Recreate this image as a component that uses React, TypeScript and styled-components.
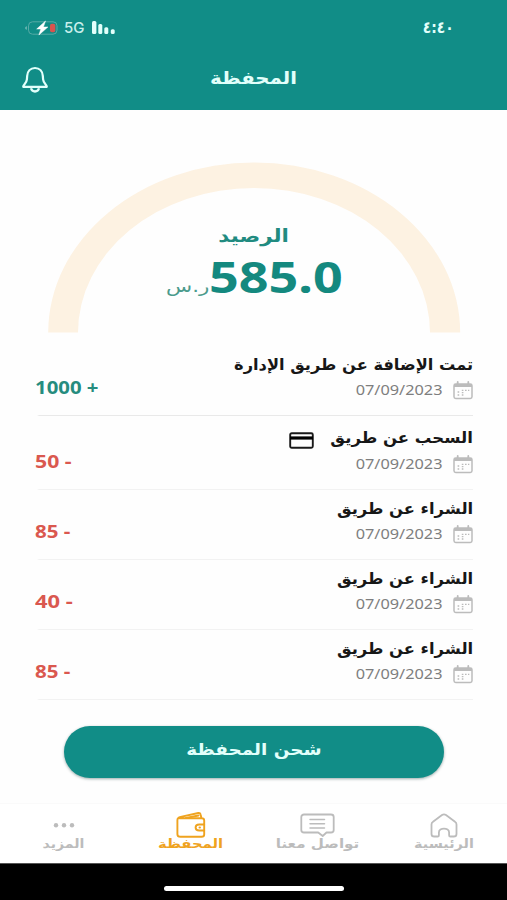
import React from "react";
import styled, { createGlobalStyle } from "styled-components";

const TEAL = "#118d87";
const GREY = "#bcbcbc";
const ORANGE = "#efa31f";

const GlobalStyle = createGlobalStyle`
  * { box-sizing: border-box; }
  body { margin: 0; background: #fefefe; }
  button { border: 0; background: none; padding: 0; font: inherit; cursor: pointer; }
  svg { display: block; flex: none; }
`;

const Screen = styled.div`
  width: 507px;
  height: 900px;
  overflow: hidden;
  display: flex;
  flex-direction: column;
  background: #fefefe;
  font-family: "DejaVu Sans", sans-serif;
`;

const Header = styled.header`
  height: 110px;
  flex: none;
  background: ${TEAL};
  color: #e2fffb;
`;

const StatusBar = styled.div`
  height: 48px;
  padding: 7px 53px 0 24px;
  display: flex;
  align-items: center;
  justify-content: space-between;
`;

const StatusIcons = styled.div`
  display: flex;
  align-items: center;
`;

const Network = styled.span`
  width: 28px;
  margin: 0 0 0 6px;
  font: 500 15px/18px Inter, sans-serif;
  color: #c9efec;
`;

const Text = styled.span<{
  $size: number;
  $line: number;
  $stretch?: number;
  $origin?: string;
  $color?: string;
  $weight?: number;
  $latin?: boolean;
}>`
  display: block;
  white-space: nowrap;
  font-family: ${(p) => (p.$latin ? '"Noto Sans", sans-serif' : '"DejaVu Sans", sans-serif')};
  font-size: ${(p) => p.$size}px;
  line-height: ${(p) => p.$line}px;
  font-weight: ${(p) => p.$weight ?? 700};
  color: ${(p) => p.$color ?? "inherit"};
  transform: scaleX(${(p) => p.$stretch ?? 1});
  transform-origin: ${(p) => p.$origin ?? "center"};
`;

const TitleBar = styled.div`
  height: 62px;
  padding: 0 21px;
  display: grid;
  grid-template-columns: 28px 1fr 28px;
  align-items: center;
  justify-items: center;
`;

const TitleSlot = styled.div`
  padding: 0 0 2px 0;
`;

const Gauge = styled.section`
  height: 235px;
  flex: none;
  padding: 52px 0 0 47px;
  display: grid;
  grid-template-columns: 414px;
  grid-template-rows: 171px;
  > * { grid-area: 1 / 1; }
`;

const Balance = styled.div`
  padding-top: 60px;
  display: flex;
  flex-direction: column;
  align-items: center;
`;

const Amount = styled.div`
  direction: ltr;
  width: 100%;
  height: 54px;
  display: grid;
  grid-template-columns: 162px 1fr;
  align-items: center;
  justify-items: end;
  > :last-child { justify-self: start; }
`;

const Currency = styled.div`
  padding-top: 18px;
`;

const List = styled.ul`
  list-style: none;
  margin: 0;
  padding: 0 34px 0 35px;
`;

const Row = styled.li<{ $height: number; $strong: boolean }>`
  height: ${(p) => p.$height}px;
  padding-bottom: 15px;
  display: flex;
  justify-content: space-between;
  align-items: flex-end;
  border-bottom: 1px solid;
  border-image: linear-gradient(to right, transparent 3px, ${(p) => (p.$strong ? "#e9e9e9" : "#f2f2f2")} 5px) 1;
`;

const Details = styled.div`
  display: flex;
  flex-direction: column;
  align-items: flex-start;
`;

const RowTitle = styled.div<{ $gap: number }>`
  height: 24px;
  margin-bottom: ${(p) => p.$gap}px;
  display: flex;
  align-items: center;
`;

const TitleBox = styled.div<{ $width: number }>`
  width: ${(p) => p.$width}px;
  display: flex;
`;

const CardSlot = styled.div`
  margin: 5px 16px 0 0;
`;

const DateLine = styled.div`
  height: 20px;
  display: flex;
  align-items: center;
  gap: 11px;
`;

const Sum = styled.div`
  direction: ltr;
  padding-bottom: 1px;
`;

const ActionArea = styled.div`
  height: 103px;
  flex: none;
  padding: 26px 63px 0 64px;
`;

const ChargeButton = styled.button`
  width: 100%;
  height: 52px;
  padding-bottom: 5px;
  display: flex;
  align-items: center;
  justify-content: center;
  border-radius: 26px;
  background: ${TEAL};
  color: #e2fffb;
  box-shadow: 0 1px 3px rgba(0, 50, 48, 0.4);
`;

const Nav = styled.nav`
  height: 60px;
  flex: none;
  display: grid;
  grid-template-columns: 127px 126px 127px 127px;
  background: #fff;
  border-top: 1px solid #fafafa;
`;

const NavItem = styled.button<{ $active?: boolean }>`
  padding-top: 8px;
  display: flex;
  flex-direction: column;
  align-items: center;
  color: ${(p) => (p.$active ? ORANGE : GREY)};
`;

const NavIcon = styled.div`
  height: 26px;
  margin-bottom: -3px;
  display: flex;
  align-items: center;
`;

const HomeArea = styled.footer`
  flex: 1;
  background: #000;
  border-top: 1px solid #555;
  display: flex;
  justify-content: center;
  padding-top: 22px;
`;

const HomeIndicator = styled.div`
  width: 180px;
  height: 5px;
  border-radius: 3px;
  background: #fff;
`;

const BatteryIcon = () => (
  <svg width="34" height="16" viewBox="0 0 34 16">
    <path d="M2.8 6.2v3.6C.6 9.2.6 6.8 2.8 6.2Z" fill="#72b9b5" />
    <rect x="4.500" y="1.800" width="28.500" height="12.400" rx="4" fill="none" stroke="#56aaa6" />
    <rect x="26" y="3.700" width="5.300" height="8.600" rx="1.800" fill="#d9534e" />
    <path d="m21.500 1-8.800 8h4.100l-1.900 6 9-8h-4.500Z" fill="#fff" stroke="#fff" strokeWidth=".5" />
  </svg>
);

const SignalIcon = () => (
  <svg width="24" height="14" viewBox="0 0 24 14" fill="#e2fffb">
    <rect x="0" y="0" width="4.400" height="13" rx="1.500" />
    <rect x="6.300" y="3" width="4" height="10" rx="1.500" />
    <rect x="12.300" y="6.200" width="4" height="6.800" rx="1.500" />
    <rect x="18.800" y="8.200" width="3.900" height="4.800" rx="1.500" />
  </svg>
);

const BellIcon = () => (
  <svg width="28" height="28" viewBox="0 0 28 28" fill="none" stroke="#e2fffb" strokeWidth="2.200" strokeLinejoin="round">
    <path d="M14 3c-4.700 0-7.500 3.300-7.800 7.800l-.3 3.600c-.2 2.200-.9 3.100-2.200 4.600-.9 1-1.500 1.600-1.500 2.800h23.600c0-1.200-.6-1.800-1.500-2.800-1.300-1.500-2-2.400-2.200-4.600l-.3-3.600C21.500 6.300 18.700 3 14 3Z" />
    <path d="M10 23.300c.5 2 2 3.200 4 3.200s3.500-1.200 4-3.200" strokeWidth="2.300" />
  </svg>
);

const CalendarIcon = () => (
  <svg width="20" height="19" viewBox="0 0 20 19" fill="none" stroke="#bcbcbc">
    <rect x="1" y="3" width="18" height="14.500" rx="1.700" strokeWidth="1.500" />
    <path d="M1 4.500h18" strokeWidth="3" />
    <path d="M4.700 1v3.500M15.300 1v3.500" strokeWidth="1.800" strokeLinecap="round" />
    <path d="M8.800 9.300h1.600M12 9.300h1.600M15 9.300h1.300M4.600 11h1.600M8.800 11.600h1.600M4.600 14h1.600M8.800 14h1.600" strokeWidth="1.300" />
  </svg>
);

const CardIcon = () => (
  <svg width="25" height="17" viewBox="0 0 25 17" fill="none" stroke="#1a1a1a">
    <rect x="1.200" y="1.200" width="22.600" height="14.600" rx="1.500" strokeWidth="1.900" />
    <path d="M1 6h23" strokeWidth="3.200" stroke="#000" />
  </svg>
);

const HomeIcon = () => (
  <svg width="28" height="25" viewBox="0 0 28 25" fill="none" stroke="currentColor" strokeWidth="1.800" strokeLinejoin="round">
    <path d="M4.200 23.500h3.500c.8 0 1.200-.5 1.200-1.300v-2.700c0-5.300 10.200-5.300 10.200 0v2.700c0 .8.400 1.300 1.200 1.300h3.500c1.600 0 2.700-1 2.700-2.600V11.500c0-1.300-.4-2.100-1.500-2.800L16 2c-1.400-.9-2.600-.9-4 0L3 8.700c-1.100.7-1.500 1.500-1.500 2.800v9.400c0 1.600 1.100 2.600 2.700 2.600Z" />
  </svg>
);

const ChatIcon = () => (
  <svg width="35" height="25" viewBox="0 0 35 25" fill="none" stroke="currentColor" strokeWidth="1.800" strokeLinejoin="round">
    <path d="M4 1.500h27c1.600 0 2.700 1 2.700 2.500v13c0 1.500-1.100 2.500-2.700 2.500h-4.500L22.700 23l-4.500-3.500H4c-1.600 0-2.700-1-2.700-2.500V4c0-1.500 1.100-2.500 2.700-2.500Z" />
    <path d="M10 6.500h14.500M10 10.700h14.500M10 14.900h14.500" strokeWidth="1.500" strokeLinecap="round" />
  </svg>
);

const WalletIcon = () => (
  <svg width="30" height="26" viewBox="0 0 30 26" fill="none" stroke="currentColor" strokeWidth="1.900" strokeLinejoin="round" strokeLinecap="round">
    <path d="M3.500 6.300h22c1.700 0 2.700.8 2.700 2.200v4h-5c-4.800 0-4.800 6 0 6h5v4c0 1.500-1 2.300-2.700 2.300h-21c-1.900 0-3.100-1-3.100-2.600V8c0-1.900 1.300-2.700 3.300-3.100L22.300 1c1.300-.2 2 .4 2.200 1.300l1 4" />
    <path d="m10 6 12.500-2.500M28.200 12.500v6M23.500 15.500h.5" />
  </svg>
);

const MoreIcon = () => (
  <svg width="22" height="6" viewBox="0 0 22 6" fill="currentColor">
    <circle cx="3" cy="3.300" r="2.200" />
    <circle cx="11" cy="3.300" r="2.200" />
    <circle cx="19" cy="3.300" r="2.200" />
  </svg>
);

type Entry = {
  title: string;
  width: number;
  stretch: number;
  sum: string;
  sumStretch: number;
  height: number;
  credit?: boolean;
  card?: boolean;
};

const entries: Entry[] = [
  { title: "تمت الإضافة عن طريق الإدارة", width: 239, stretch: 1.048, sum: "1000 +", sumStretch: 1.13, height: 71, credit: true },
  { title: "السحب عن طريق", width: 143, stretch: 1.065, sum: "50 -", sumStretch: 1.18, height: 74, card: true },
  { title: "الشراء عن طريق", width: 137, stretch: 1.055, sum: "85 -", sumStretch: 1.14, height: 70 },
  { title: "الشراء عن طريق", width: 137, stretch: 1.055, sum: "40 -", sumStretch: 1.22, height: 70 },
  { title: "الشراء عن طريق", width: 137, stretch: 1.055, sum: "85 -", sumStretch: 1.14, height: 70 },
];

const tabs = [
  { label: "الرئيسية", stretch: 1.15, icon: <HomeIcon /> },
  { label: "تواصل معنا", stretch: 1.21, icon: <ChatIcon /> },
  { label: "المحفظة", stretch: 1.18, icon: <WalletIcon />, active: true },
  { label: "المزيد", stretch: 1.13, icon: <MoreIcon /> },
];

export default function App() {
  return (
    <>
      <GlobalStyle />
      <Screen dir="rtl" lang="ar">
        <Header>
          <StatusBar dir="ltr">
            <StatusIcons>
              <BatteryIcon />
              <Network>5G</Network>
              <SignalIcon />
            </StatusIcons>
            <Text $size={16} $line={20} $stretch={0.87} $origin="right">٤:٤٠</Text>
          </StatusBar>
          <TitleBar dir="ltr">
            <BellIcon />
            <TitleSlot>
              <Text $size={17} $line={24} $stretch={1.16}>المحفظة</Text>
            </TitleSlot>
          </TitleBar>
        </Header>

        <Gauge dir="ltr">
          <svg width="414" height="171" viewBox="0 0 414 171">
            <path d="M1.200 170.600A206 170 0 0 1 413.200 170.600H383A176 144.600 0 0 0 31 170.600Z" fill="#fdf2e2" />
          </svg>
          <Balance dir="rtl">
            <Text $size={18} $line={28} $stretch={1.19} $color="#218b80">الرصيد</Text>
            <Amount>
              <Currency>
                <Text $size={17} $line={30} $weight={400} $stretch={1.26} $origin="right" $color="#4b9b8c">ر.س</Text>
              </Currency>
              <Text $latin $size={43} $line={54} $stretch={1.21} $origin="left" $color="#14897f">585.0</Text>
            </Amount>
          </Balance>
        </Gauge>

        <List>
          {entries.map((entry, i) => (
            <Row key={i} $height={entry.height} $strong={i === 0}>
              <Details>
                <RowTitle $gap={entry.card ? 4 : 3}>
                  <TitleBox $width={entry.width}>
                    <Text $size={15.5} $line={24} $stretch={entry.stretch} $origin="right" $color="#171717">
                      {entry.title}
                    </Text>
                  </TitleBox>
                  {entry.card && (
                    <CardSlot>
                      <CardIcon />
                    </CardSlot>
                  )}
                </RowTitle>
                <DateLine>
                  <CalendarIcon />
                  <Text $latin $size={14} $line={20} $weight={400} $stretch={1.165} $origin="right" $color="#7e7e7e">
                    07/09/2023
                  </Text>
                </DateLine>
              </Details>
              <Sum>
                <Text $latin $size={18} $line={24} $stretch={entry.sumStretch} $origin="left" $color={entry.credit ? "#268c7e" : "#da584f"}>
                  {entry.sum}
                </Text>
              </Sum>
            </Row>
          ))}
        </List>

        <ActionArea>
          <ChargeButton>
            <Text $size={16} $line={24} $stretch={1.15}>شحن المحفظة</Text>
          </ChargeButton>
        </ActionArea>

        <Nav>
          {tabs.map((tab) => (
            <NavItem key={tab.label} $active={tab.active}>
              <NavIcon>{tab.icon}</NavIcon>
              <Text $size={12.5} $line={18} $stretch={tab.stretch}>
                {tab.label}
              </Text>
            </NavItem>
          ))}
        </Nav>

        <HomeArea>
          <HomeIndicator />
        </HomeArea>
      </Screen>
    </>
  );
}
